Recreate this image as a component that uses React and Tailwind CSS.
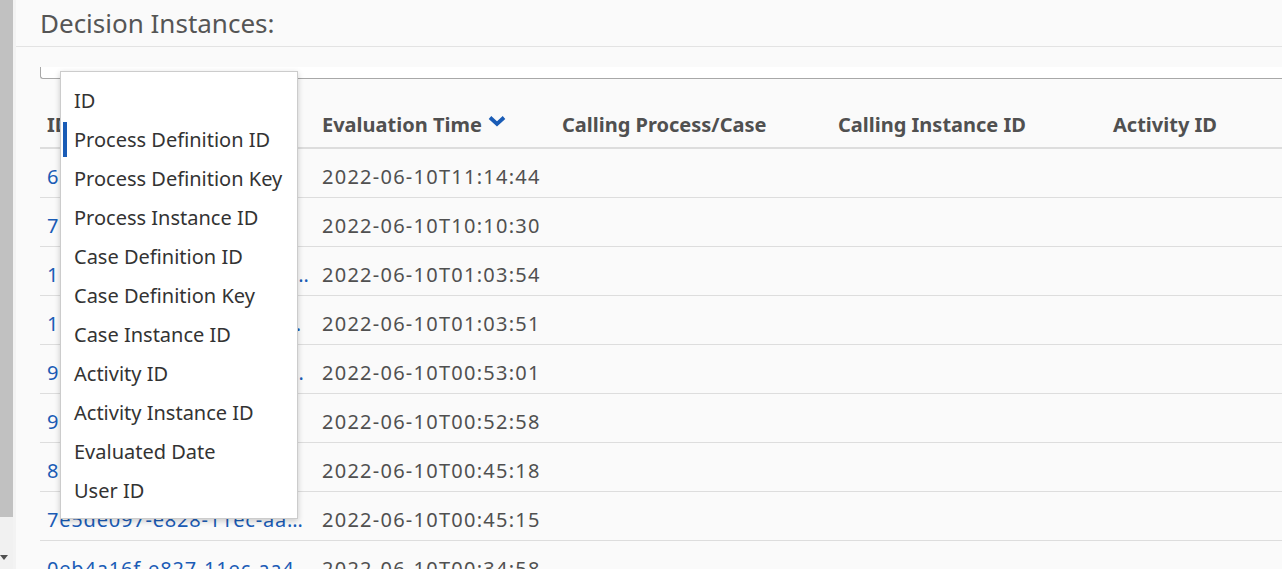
import React from 'react';

const columns = [
    { label: 'ID', width: 'w-[275px]' },
    { label: 'Evaluation Time', width: 'w-[240px]', sorted: true },
    { label: 'Calling Process/Case', width: 'w-[276px]' },
    { label: 'Calling Instance ID', width: 'w-[275px]' },
    { label: 'Activity ID', width: 'flex-1' },
];

const rows = [
    { id: '6b1f0d2a-e8b5', time: '2022-06-10T11:14:44' },
    { id: '7c2e9a41-e8a4', time: '2022-06-10T10:10:30' },
    { id: '1d8c5e3f-e833-11ec-aa4f-0242ac120002', time: '2022-06-10T01:03:54' },
    { id: '1b5a7c90-e833-11ec-aa4f-0242ac120002', time: '2022-06-10T01:03:51' },
    { id: '9e3d4b12-e831-11ec-aa4f-0242ac120002', time: '2022-06-10T00:53:01' },
    { id: '9c71e5a8-e831', time: '2022-06-10T00:52:58' },
    { id: '81f2c4d6-e828', time: '2022-06-10T00:45:18' },
    { id: '7e5de097-e828-11ec-aa4f-0242ac120002', time: '2022-06-10T00:45:15' },
    { id: '0eb4a16f-e827-11ec-aa4f-0242ac120002', time: '2022-06-10T00:34:58' },
];

const menuItems = [
    'ID',
    'Process Definition ID',
    'Process Definition Key',
    'Process Instance ID',
    'Case Definition ID',
    'Case Definition Key',
    'Case Instance ID',
    'Activity ID',
    'Activity Instance ID',
    'Evaluated Date',
    'User ID',
];

const ChevronDown = () => (
    <svg width="18" height="12" viewBox="0 0 18 12" className="ml-[6px] mt-[-8px]">
        <polyline points="2,2.5 9,9 16,2.5" fill="none" stroke="#1a5cb6" strokeWidth="3.8" />
    </svg>
);

const App = () => {
    return (
        <div
            className="flex h-[569px] w-[1282px] overflow-hidden bg-[#fafafa]"
            style={{ fontFamily: '"Noto Sans", "Open Sans", sans-serif' }}
        >
            {/* scrollbar strip */}
            <div className="flex w-[13px] flex-col bg-[#f1f1f1]">
                <div className="h-[517px] bg-[#c1c1c1]"></div>
                <div className="mt-auto mb-[9px] h-0 w-0 border-x-[4px] border-t-[5px] border-x-transparent border-t-[#505050]"></div>
            </div>
            <div className="w-[3px] bg-[#f3f3f3]"></div>

            {/* main */}
            <div className="relative flex-1">
                <div className="h-[47px] border-b border-[#e3e3e3] pl-[24px] pt-[6px]">
                    <h1 className="text-[26px] leading-[34px] text-[#555]">Decision Instances:</h1>
                </div>

                <div className="ml-[24px]">
                    {/* search input */}
                    <div className="mt-[20px] h-[12px] rounded-bl-[3px] border-b border-l border-[#a8a8a8] bg-white"></div>

                    {/* header */}
                    <div className="flex border-b-2 border-[#dddddd] pt-[33px] pb-[9px]">
                        {columns.map((col) => (
                            <div key={col.label} className={`${col.width} flex items-center pl-[7px]`}>
                                <span className="text-[20px] font-bold leading-[26px] text-[#505050]">{col.label}</span>
                                {col.sorted && <ChevronDown />}
                            </div>
                        ))}
                    </div>

                    {/* rows */}
                    {rows.map((row) => (
                        <div key={row.id} className="flex border-b border-[#dddddd] pt-[15px] pb-[7px] text-[20px] leading-[26px]">
                            <div className="w-[275px] truncate pl-[7px] pr-[3px] tracking-[0.8px] text-[#1a5cb6]">{row.id}</div>
                            <div className="w-[240px] pl-[7px] tracking-[1.25px] text-[#505050]">{row.time}</div>
                            <div className="w-[276px]"></div>
                            <div className="w-[275px]"></div>
                            <div className="flex-1"></div>
                        </div>
                    ))}
                </div>

                {/* column chooser dropdown */}
                <div className="absolute left-[44px] top-[71px] h-[448px] w-[238px] border border-[#cccccc] bg-white pt-[9px] shadow-[0_2px_6px_rgba(0,0,0,0.2)]">
                    {menuItems.map((item, i) => (
                        <div key={item} className="relative flex h-[39px] items-center pl-[13px] text-[20px] text-[#333]">
                            {i === 1 && <div className="absolute left-[2px] top-[2px] h-[35px] w-[4px] bg-[#1a5cb6]"></div>}
                            {item}
                        </div>
                    ))}
                </div>
            </div>
        </div>
    );
};

export default App;
